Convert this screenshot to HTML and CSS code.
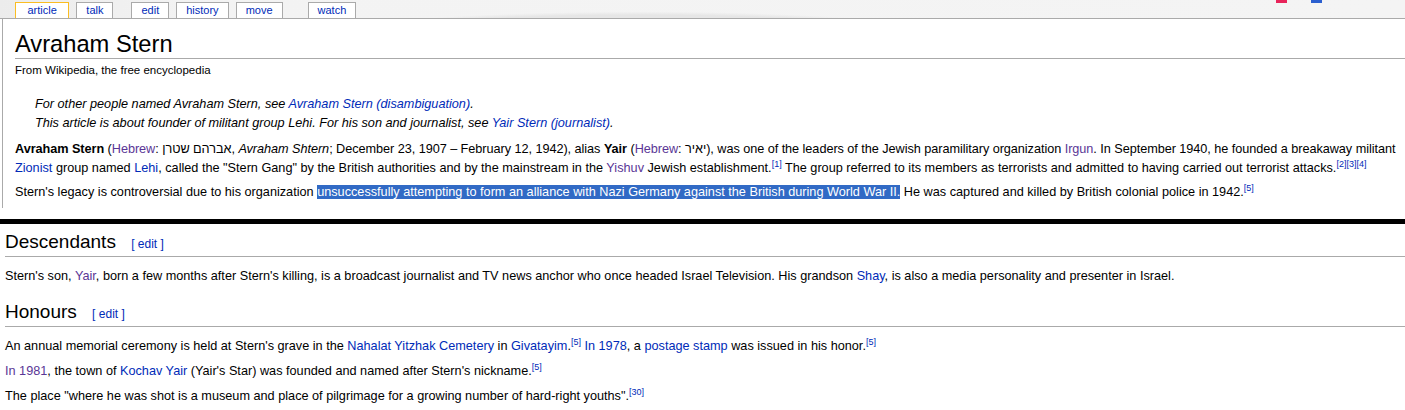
FILE: index.html
```html
<!DOCTYPE html>
<html lang="en">
<head>
<meta charset="utf-8">
<title>Avraham Stern</title>
<link rel="stylesheet" href="styles.css">
</head>
<body>
<div class="topbar">
  <ul class="tabs">
    <li class="tab selected"><a href="#">article</a></li>
    <li class="tab"><a href="#">talk</a></li>
    <li class="tab tab-gap"><a href="#">edit</a></li>
    <li class="tab"><a href="#">history</a></li>
    <li class="tab"><a href="#">move</a></li>
    <li class="tab tab-gap-wide"><a href="#">watch</a></li>
  </ul>
  <span class="mark mark-red"></span>
  <span class="mark mark-blue"></span>
</div>
<div class="content">
  <h1 class="title">Avraham Stern</h1>
  <div class="tagline">From Wikipedia, the free encyclopedia</div>
  <div class="hatnotes">
    <div class="hatnote">For other people named Avraham Stern, see <a href="#">Avraham Stern (disambiguation)</a>.</div>
    <div class="hatnote">This article is about founder of militant group Lehi. For his son and journalist, see <a href="#">Yair Stern (journalist)</a>.</div>
  </div>
  <p class="para"><span class="tight"><b>Avraham Stern</b> (<a class="visited" href="#">Hebrew</a>: <span lang="he" dir="rtl">אברהם שטרן</span>&lrm;, <i>Avraham Shtern</i>; December 23, 1907 – February 12, 1942), alias <b>Yair</b> (<a class="visited" href="#">Hebrew</a>: <span lang="he" dir="rtl">יאיר</span>&lrm;), was one of the leaders of the Jewish paramilitary organization <a class="visited" href="#">Irgun</a>. In September 1940, he founded a breakaway militant</span> <a href="#">Zionist</a> group named <a href="#">Lehi</a>, called the "Stern Gang" by the British authorities and by the mainstream in the <a class="visited" href="#">Yishuv</a> Jewish establishment.<sup class="ref"><a href="#">[1]</a></sup> The group referred to its members as terrorists and admitted to having carried out terrorist attacks.<sup class="ref"><a href="#">[2]</a><a href="#">[3]</a><a href="#">[4]</a></sup></p>
  <p class="para">Stern's legacy is controversial due to his organization <span class="selected-text">unsuccessfully attempting to form an alliance with Nazi Germany against the British during World War II.</span> He was captured and killed by British colonial police in 1942.<sup class="ref"><a href="#">[5]</a></sup></p>
</div>
<div class="divider"></div>
<div class="lower">
  <h2 class="section">Descendants <span class="editsection"><a href="#">[ edit ]</a></span></h2>
  <p class="para">Stern's son, <a class="visited" href="#">Yair</a>, born a few months after Stern's killing, is a broadcast journalist and TV news anchor who once headed Israel Television. His grandson <a href="#">Shay</a>, is also a media personality and presenter in Israel.</p>
  <h2 class="section">Honours <span class="editsection"><a href="#">[ edit ]</a></span></h2>
  <p class="para">An annual memorial ceremony is held at Stern's grave in the <a href="#">Nahalat Yitzhak Cemetery</a> in <a href="#">Givatayim</a>.<sup class="ref"><a href="#">[5]</a></sup> <a href="#">In 1978</a>, a <a href="#">postage stamp</a> was issued in his honor.<sup class="ref"><a href="#">[5]</a></sup></p>
  <p class="para"><a class="visited" href="#">In 1981</a>, the town of <a href="#">Kochav Yair</a> (Yair's Star) was founded and named after Stern's nickname.<sup class="ref"><a href="#">[5]</a></sup></p>
  <p class="para">The place "where he was shot is a museum and place of pilgrimage for a growing number of hard-right youths".<sup class="ref"><a href="#">[30]</a></sup></p>
</div>
</body>
</html>
```
FILE: styles.css
```css
html, body {
  margin: 0;
  padding: 0;
  background: #fff;
}
body {
  font-family: "Liberation Sans", Arial, sans-serif;
  color: #000;
  font-size: 12.7px;
  overflow: hidden;
}
a {
  color: #002bb8;
  text-decoration: none;
}
a.visited {
  color: #5a3696;
}

.topbar {
  position: relative;
  height: 18px;
  border-bottom: 1px solid #aaa;
  background:
    radial-gradient(ellipse 520px 70px at 640px 78px, rgba(0,0,0,0) 78%, #e6e6e6 82%, #e6e6e6 90%, rgba(0,0,0,0) 95%),
    linear-gradient(100deg, #ececec 0%, #f3f3f3 15%, #f4f4f4 100%);
}
.tabs {
  list-style: none;
  margin: 0;
  padding: 2px 0 0 15px;
  display: flex;
  gap: 7px;
  height: 16px;
}
.tab {
  height: 16px;
  box-sizing: border-box;
  border: 1px solid #aaa;
  border-bottom: none;
  background: #fff;
  padding: 0 9px;
  font-size: 11px;
  line-height: 15px;
}
.tab.selected {
  border-color: #fabd23;
  padding: 0 11.5px;
}
.tab-gap {
  margin-left: 11px;
}
.tab-gap-wide {
  margin-left: 18px;
}
.mark {
  position: absolute;
  top: 0;
  height: 3px;
  width: 11px;
}
.mark-red {
  left: 1276px;
  background: #e8245a;
}
.mark-blue {
  left: 1311px;
  background: #2b5fcf;
}

.content {
  margin-left: 2px;
  border-left: 1px solid #aaa;
  padding: 12px 0 6px 12px;
}
.title {
  margin: 0;
  font-size: 23.7px;
  font-weight: normal;
  line-height: 27px;
  border-bottom: 1px solid #aaa;
}
.tagline {
  margin-top: 4px;
  font-size: 11.5px;
  line-height: 14px;
}
.hatnotes {
  margin-top: 18px;
  padding-left: 20px;
  font-style: italic;
  line-height: 19px;
}
.para {
  margin: 0;
  line-height: 19px;
}
.tight {
  letter-spacing: -0.05px;
}
.hatnotes + .para {
  margin-top: 7px;
}
.content .para + .para {
  margin-top: 5px;
}
.ref {
  font-size: 9px;
  line-height: 1;
  vertical-align: 5px;
  letter-spacing: 0;
}
.selected-text {
  background: #316ac5;
  color: #fff;
}

.divider {
  margin-top: 11px;
  height: 5px;
  background: #000;
}

.lower {
  padding: 6px 0 0 5px;
}
.section {
  margin: 0 0 10px 0;
  font-size: 19px;
  font-weight: normal;
  line-height: 24px;
  border-bottom: 1px solid #aaa;
}
.para + .section {
  margin-top: 14px;
}
.editsection {
  font-size: 12px;
  margin-left: 10px;
}
.lower .para + .para {
  margin-top: 6px;
}
```
